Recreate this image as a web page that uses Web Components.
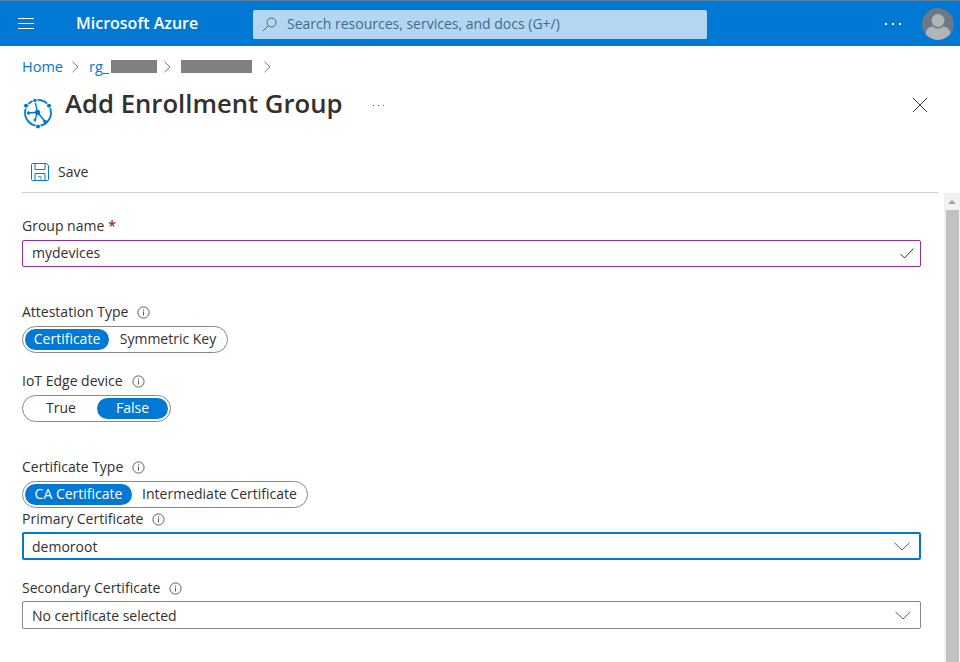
<!DOCTYPE html>
<html>
<head>
<meta charset="utf-8">
<title>Add Enrollment Group</title>
<style>
    html, body { margin: 0; height: 662px; overflow: hidden; background: #fff; }
    body { font-family: 'Open Sans', 'Noto Sans', sans-serif; font-size: 14px; color: #323130; }
    .page-body { display: flex; height: 469px; }
    .form { flex: 1; padding: 23px 23px 0 22px; }
</style>
</head>
<body>
<az-topbar></az-topbar>
<az-breadcrumb></az-breadcrumb>
<az-header>Add Enrollment Group</az-header>
<az-toolbar></az-toolbar>
<div class="page-body">
    <div class="form">
        <az-label required>Group name</az-label>
        <az-textbox valid value="mydevices"></az-textbox>
        <az-label info style="margin-top:35px">Attestation Type</az-label>
        <az-pills options="Certificate|Symmetric Key" selected="0" columns="84px 116px"></az-pills>
        <az-label info style="margin-top:18px">IoT Edge device</az-label>
        <az-pills options="True|False" selected="1" columns="72px 71px"></az-pills>
        <az-label info style="margin-top:35px">Certificate Type</az-label>
        <az-pills options="CA Certificate|Intermediate Certificate" selected="0" columns="107px 173px"></az-pills>
        <az-label info style="margin-top:1px;margin-bottom:3px">Primary Certificate</az-label>
        <az-textbox select focused value="demoroot"></az-textbox>
        <az-label info style="margin-top:18px;margin-bottom:3px">Secondary Certificate</az-label>
        <az-textbox select value="No certificate selected"></az-textbox>
    </div>
    <az-scrollbar></az-scrollbar>
</div>

<script>
const INFO_ICON = `<svg width="13" height="13" viewBox="0 0 13 13" fill="none">
    <circle cx="6.5" cy="6.5" r="5.6" stroke="#605e5c"/>
    <rect x="6" y="5.5" width="1" height="4" fill="#605e5c"/>
    <rect x="6" y="3.4" width="1" height="1.2" fill="#605e5c"/>
</svg>`;

class AzTopbar extends HTMLElement {
    constructor() {
        super();
        this.attachShadow({ mode: 'open' });
        this.shadowRoot.innerHTML = `
            <style>
                :host { display: flex; align-items: center; height: 45px; background: #0078d4; border-top: 1px solid #5b7f9f; font-family: 'Open Sans', sans-serif; }
                .menu { margin-left: 18px; width: 16px; height: 11px; display: flex; flex-direction: column; justify-content: space-between; }
                .menu i { display: block; height: 1px; background: #fff; }
                .brand { margin-left: 42px; width: 177px; padding-bottom: 2px; color: #fff; font-size: 16px; font-weight: 600; white-space: nowrap; }
                .search { display: flex; align-items: center; box-sizing: border-box; width: 454px; height: 29px; margin-top: 1px; padding-left: 9px; background: #b3d7f2; border-radius: 2px; color: #3c6a91; font-size: 14px; white-space: nowrap; }
                .search svg { margin-right: 10px; }
                .search span { padding-bottom: 2px; }
                .dots { margin-left: 178px; width: 16px; display: flex; justify-content: space-between; }
                .dots i { width: 2px; height: 2px; background: #fff; }
                .avatar { margin-left: 21px; display: block; }
            </style>
            <div class="menu"><i></i><i></i><i></i></div>
            <div class="brand">Microsoft Azure</div>
            <div class="search">
                <svg width="15" height="15" viewBox="0 0 15 15" fill="none" stroke="#3c6a91" stroke-width="1">
                    <circle cx="9.5" cy="5.5" r="4.5"/><path d="M6.2 8.8 1 14"/>
                </svg>
                <span>Search resources, services, and docs (G+/)</span>
            </div>
            <div class="dots"><i></i><i></i><i></i></div>
            <svg class="avatar" width="32" height="32" viewBox="0 0 32 32">
                <circle cx="16" cy="16" r="16" fill="#6a7888"/>
                <circle cx="16" cy="12.5" r="6.5" fill="#b1b4b6"/>
                <path d="M3.6 26c0-5 4-7.5 7-7.5 1.5 1.3 3.3 2 5.4 2s3.900-.7 5.400-2c3 0 7 2.500 7 7.500a16 16 0 0 1-24.800 0z" fill="#b1b4b6"/>
            </svg>
        `;
    }
}

class AzBreadcrumb extends HTMLElement {
    constructor() {
        super();
        this.attachShadow({ mode: 'open' });
        const chevron = `<svg width="7" height="12" viewBox="0 0 7 12" fill="none" stroke="#7a7a7a"><path d="M.5.8 6 6 .5 11.200"/></svg>`;
        this.shadowRoot.innerHTML = `
            <style>
                :host { display: flex; align-items: center; height: 20px; margin-top: 11px; padding-left: 22px; color: #0078d4; font-size: 14.5px; }
                svg { display: block; }
                .text { padding-bottom: 2px; }
                .block { background: #808080; height: 13px; margin-bottom: 1px; }
            </style>
            <span class="text">Home</span>
            <span style="margin-left:9px;margin-right:10px">${chevron}</span>
            <span class="text">rg_</span>
            <span class="block" style="width:46px;margin-left:2px"></span>
            <span style="margin-left:7px;margin-right:10px">${chevron}</span>
            <span class="block" style="width:71px"></span>
            <span style="margin-left:12px">${chevron}</span>
        `;
    }
}

class AzHeader extends HTMLElement {
    constructor() {
        super();
        this.attachShadow({ mode: 'open' });
        this.shadowRoot.innerHTML = `
            <style>
                :host { display: flex; align-items: flex-start; height: 62px; margin-top: 11px; padding-left: 23px; }
                .icon { margin-top: 10px; margin-right: 13px; flex: none; }
                h1 { margin: 0; font-size: 25.7px; line-height: 32px; font-weight: 600; color: #323130; white-space: nowrap; }
                .more { margin-left: 30px; margin-top: 17px; width: 11px; display: flex; justify-content: space-between; }
                .more i { width: 1px; height: 1px; background: #555; }
                .close { margin-left: auto; margin-right: 33px; margin-top: 10px; }
            </style>
            <svg class="icon" width="29" height="32" viewBox="0 0 29 32" fill="none">
                <circle cx="15" cy="14.800" r="13" stroke="#0078d4" stroke-width="1.800"/>
                <path d="M14.500 14.300 12 3M14.500 14.300 5.500 15M14.500 14.300 22 23.500M14.500 14.300 12 22" stroke="#0078d4" stroke-width="1.400"/>
                <g fill="#0078d4" stroke="#fff">
                    <circle cx="12" cy="2.500" r="2.200"/>
                    <circle cx="26" cy="7.700" r="2.500"/>
                    <circle cx="3" cy="7.700" r="2.500"/>
                    <circle cx="15" cy="28.500" r="2.500"/>
                </g>
                <g fill="#0078d4">
                    <circle cx="14.500" cy="14.300" r="2.600"/>
                    <circle cx="5.500" cy="15" r="1.700"/>
                    <circle cx="22" cy="23.500" r="1.800"/>
                    <circle cx="12" cy="22" r="1.400"/>
                </g>
            </svg>
            <h1><slot></slot></h1>
            <div class="more"><i></i><i></i><i></i></div>
            <svg class="close" width="14" height="14" viewBox="0 0 14 14" fill="none" stroke="#3b3a39"><path d="M0 0 14 14M14 0 0 14"/></svg>
        `;
    }
}

class AzToolbar extends HTMLElement {
    constructor() {
        super();
        this.attachShadow({ mode: 'open' });
        this.shadowRoot.innerHTML = `
            <style>
                :host { display: flex; align-items: center; box-sizing: border-box; height: 43px; margin: 0 22px; padding: 2px 0 0 9px; border-bottom: 1px solid #d2d0ce; }
                svg { margin-right: 9px; display: block; }
                span { padding-bottom: 2px; font-size: 14px; color: #323130; }
            </style>
            <svg width="18" height="18" viewBox="0 0 18 18" fill="none" stroke="#0078d4">
                <path d="M.5 1.500a1 1 0 0 1 1-1h14l2 2v14a1 1 0 0 1-1 1h-15a1 1 0 0 1-1-1z"/>
                <path d="M4 .5v6h10v-6M4 17.500v-7h10v7" stroke="#0078d4"/>
                <path d="M7 13.500h3v4" stroke="#4a9ee0"/>
            </svg>
            <span>Save</span>
        `;
    }
}

class AzLabel extends HTMLElement {
    constructor() {
        super();
        this.attachShadow({ mode: 'open' });
        const star = this.hasAttribute('required') ? '<b>*</b>' : '';
        const info = this.hasAttribute('info') ? `<span class="info">${INFO_ICON}</span>` : '';
        this.shadowRoot.innerHTML = `
            <style>
                :host { display: flex; align-items: center; height: 20px; margin-bottom: 4px; font-size: 14px; color: #323130; white-space: nowrap; }
                .text { padding-bottom: 2px; }
                b { margin-left: 4px; padding-bottom: 2px; color: #a4262c; font-weight: 600; }
                .info { margin-left: 9px; display: flex; }
            </style>
            <span class="text"><slot></slot></span>${star}${info}
        `;
    }
}

class AzTextbox extends HTMLElement {
    constructor() {
        super();
        this.attachShadow({ mode: 'open' });
        const isSelect = this.hasAttribute('select');
        const value = this.getAttribute('value') || '';
        const icon = isSelect
            ? `<svg width="16" height="9" viewBox="0 0 16 9" fill="none" stroke="#605e5c"><path d="M.5.8 8 8 15.500.8"/></svg>`
            : `<svg width="14" height="11" viewBox="0 0 14 11" fill="none" stroke="#323130"><path d="M.5 6 4.500 10 13.500.5"/></svg>`;
        let border = '1px solid #8a8886', pad = '9px', h = '28px';
        if (this.hasAttribute('valid')) { border = '1px solid #8f2fb0'; h = '27px'; }
        if (this.hasAttribute('focused')) { border = '2px solid #0078d4'; pad = '8px'; }
        this.shadowRoot.innerHTML = `
            <style>
                :host { display: flex; align-items: center; justify-content: space-between; box-sizing: border-box; height: ${h}; padding: 0 ${isSelect ? '9px' : '6px'} 0 ${pad}; border: ${border}; border-radius: 2px; font-size: 14px; color: #323130; }
                svg { display: block; }
                span { margin-top: ${isSelect ? '1px' : '-2px'}; }
            </style>
            <span>${value}</span>${icon}
        `;
    }
}

class AzPills extends HTMLElement {
    constructor() {
        super();
        this.attachShadow({ mode: 'open' });
        const options = this.getAttribute('options').split('|');
        const selected = Number(this.getAttribute('selected'));
        const items = options.map((o, i) => `<div class="pill ${i === selected ? 'on' : ''}">${o}</div>`).join('');
        this.shadowRoot.innerHTML = `
            <style>
                :host { display: grid; grid-template-columns: ${this.getAttribute('columns')}; width: fit-content; box-sizing: border-box; height: 27px; padding: 2px; border: 1px solid #8a8886; border-radius: 14px; font-size: 14px; color: #323130; white-space: nowrap; }
                .pill { display: flex; align-items: center; justify-content: center; padding-bottom: 2px; border-radius: 11px; }
                .on { background: #0078d4; color: #fff; }
                .on + .pill { padding-left: 2px; }
            </style>
            ${items}
        `;
    }
}

class AzScrollbar extends HTMLElement {
    constructor() {
        super();
        this.attachShadow({ mode: 'open' });
        this.shadowRoot.innerHTML = `
            <style>
                :host { display: flex; flex-direction: column; width: 16px; background: #f1f1f1; }
                .arrow { height: 17px; display: flex; justify-content: center; padding-top: 7px; box-sizing: border-box; }
                .arrow i { width: 0; height: 0; border-left: 4px solid transparent; border-right: 4px solid transparent; border-bottom: 4px solid #a3a3a3; }
                .thumb { flex: 1; width: 13px; margin-left: 2px; background: #c1c1c1; }
            </style>
            <div class="arrow"><i></i></div>
            <div class="thumb"></div>
        `;
    }
}

customElements.define('az-topbar', AzTopbar);
customElements.define('az-breadcrumb', AzBreadcrumb);
customElements.define('az-header', AzHeader);
customElements.define('az-toolbar', AzToolbar);
customElements.define('az-label', AzLabel);
customElements.define('az-textbox', AzTextbox);
customElements.define('az-pills', AzPills);
customElements.define('az-scrollbar', AzScrollbar);
</script>
</body>
</html>
